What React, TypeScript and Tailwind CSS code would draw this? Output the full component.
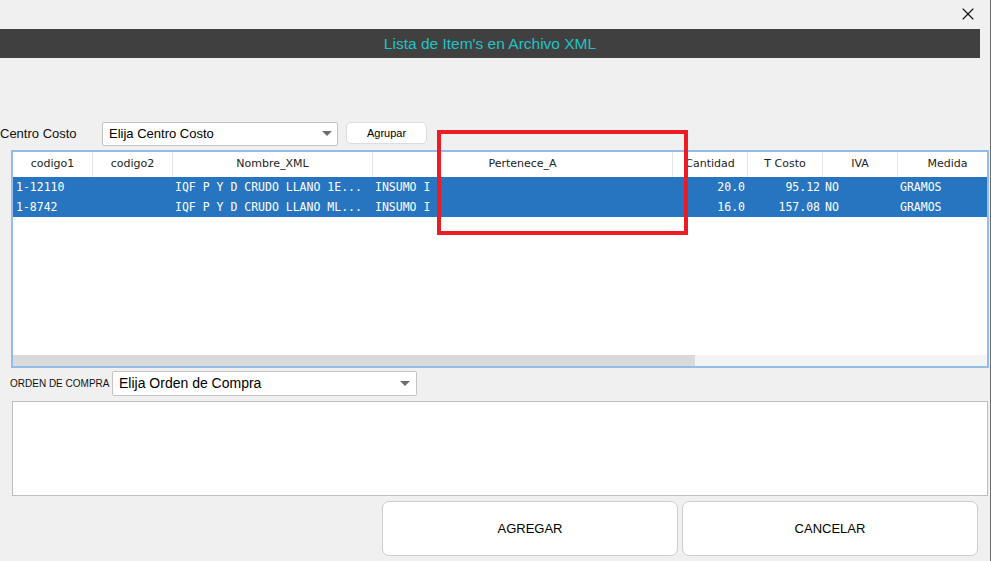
import { X } from 'lucide-react';

const cols = [
  { name: 'codigo1', w: 'w-[79px]', align: 'text-left' },
  { name: 'codigo2', w: 'w-[80px]', align: 'text-left' },
  { name: 'Nombre_XML', w: 'w-[200px]', align: 'text-left' },
  { name: 'Pertenece_A', w: 'w-[300px]', align: 'text-left' },
  { name: 'Cantidad', w: 'w-[75px]', align: 'text-right' },
  { name: 'T Costo', w: 'w-[75px]', align: 'text-right' },
  { name: 'IVA', w: 'w-[75px]', align: 'text-left' },
  { name: 'Medida', w: 'w-[100px]', align: 'text-left' },
];

const rows = [
  ['1-12110', '', 'IQF P Y D CRUDO LLANO 1E...', 'INSUMO I', '20.0', '95.12', 'NO', 'GRAMOS'],
  ['1-8742', '', 'IQF P Y D CRUDO LLANO ML...', 'INSUMO I', '16.0', '157.08', 'NO', 'GRAMOS'],
];

function Caret() {
  return (
    <svg width="10" height="6" viewBox="0 0 10 6">
      <path d="M0 0 L10 0 L5 5 Z" fill="#6f6f6f" />
    </svg>
  );
}

export default function App() {
  return (
    <div className="relative w-[991px] h-[561px] bg-[#f0f0f0] border-r border-[#6b6b6b] overflow-hidden font-['Liberation_Sans',Arial,sans-serif] text-black">
      {/* close row */}
      <div className="h-[29px] flex justify-end items-start pt-[4px] pr-[12px]">
        <X size={20} strokeWidth={1.3} color="#111" />
      </div>

      {/* title bar */}
      <div className="h-[29px] w-[980px] bg-[#404040] flex items-center justify-center">
        <span className="text-[15.5px] text-[#22c3c6]">Lista de Item's en Archivo XML</span>
      </div>

      {/* centro costo row */}
      <div className="mt-[64px] h-[24px] flex items-center">
        <span className="text-[13px] w-[102px] text-[#111]">Centro Costo</span>
        <div className="w-[236px] h-[24px] bg-white border border-[#c4c4c4] rounded-[2px] flex items-center justify-between pl-[6px] pr-[5px]">
          <span className="text-[13px]">Elija Centro Costo</span>
          <Caret />
        </div>
        <div className="ml-[8px] w-[81px] h-[22px] self-start bg-white border border-[#dcdcdc] rounded-[5px] flex items-center justify-center text-[11px]">
          Agrupar
        </div>
      </div>

      {/* table */}
      <div className="mt-[4px] ml-[11px] w-[978px] h-[218px] border-2 border-[#93bce8] bg-white flex flex-col overflow-hidden">
        <div className="flex h-[25px] shrink-0 bg-white font-['DejaVu_Sans',sans-serif] text-[11px] text-[#222]">
          {cols.map((c, i) => (
            <div
              key={c.name}
              className={`${c.w} shrink-0 h-full flex items-center justify-center ${i > 0 ? 'border-l border-[#e4e4e4]' : ''}`}
            >
              {c.name}
            </div>
          ))}
        </div>
        {rows.map((r, ri) => (
          <div key={ri} className="flex h-[20px] shrink-0 bg-[#2775c0] text-white font-['DejaVu_Sans_Mono',monospace] text-[11.5px]">
            {r.map((v, ci) => (
              <div
                key={ci}
                className={`${cols[ci].w} ${cols[ci].align} shrink-0 h-full leading-[20px] overflow-hidden whitespace-nowrap pl-[3px] pr-[2px]`}
              >
                {v}
              </div>
            ))}
          </div>
        ))}
        <div className="flex-1 bg-white" />
        <div className="h-[11px] shrink-0 bg-[#f4f4f4] flex">
          <div className="w-[682px] h-full bg-[#dadada]" />
        </div>
      </div>

      {/* orden de compra */}
      <div className="mt-[3px] ml-[10px] h-[25px] flex items-center">
        <span className="text-[10px] w-[102px] text-[#111]">ORDEN DE COMPRA</span>
        <div className="w-[305px] h-[25px] bg-white border border-[#c4c4c4] rounded-[2px] flex items-center justify-between pl-[6px] pr-[6px]">
          <span className="text-[14px]">Elija Orden de Compra</span>
          <Caret />
        </div>
      </div>

      {/* text area */}
      <div className="mt-[5px] ml-[12px] w-[976px] h-[95px] bg-white border border-[#bdbdbd]" />

      {/* buttons */}
      <div className="mt-[5px] flex justify-end gap-[4px] pr-[12px]">
        <div className="w-[296px] h-[55px] bg-white border border-[#cdcdcd] rounded-[7px] flex items-center justify-center text-[13px] pt-[1px]">
          AGREGAR
        </div>
        <div className="w-[296px] h-[55px] bg-white border border-[#cdcdcd] rounded-[7px] flex items-center justify-center text-[13px] pt-[1px]">
          CANCELAR
        </div>
      </div>

      {/* red highlight */}
      <div className="absolute left-[437px] top-[130px] w-[251px] h-[105px] border-4 border-[#ed1c24]" />
    </div>
  );
}
